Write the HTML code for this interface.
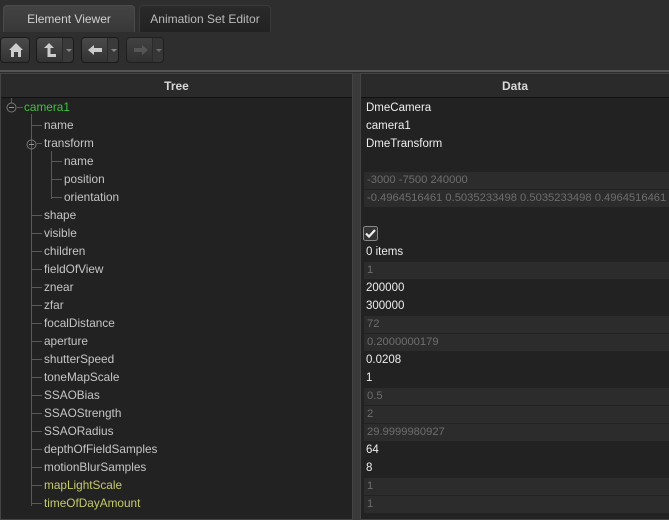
<!DOCTYPE html>
<html><head><style>
*{margin:0;padding:0;box-sizing:border-box}
body{width:669px;height:520px;background:#2d2d2d;font-family:"Liberation Sans",sans-serif;font-size:12px;position:relative;overflow:hidden}
.tab{position:absolute;top:5px;height:27px;border-radius:4px 4px 0 0;font-size:12px;text-align:center;line-height:27px}
.btn{position:absolute;top:37px;height:26px;border:1px solid #1a1a1a;border-radius:4px;background:linear-gradient(#4a4a4a,#333)}
.dd{position:absolute;right:0;top:0;bottom:0;width:11px;border-left:1px solid #2a2a2a;background:#3a3a3a;border-radius:0 4px 4px 0}
.dd:after{content:"";position:absolute;left:3px;top:11px;border:3px solid transparent;border-top:3px solid #888}
.panel{position:absolute;top:73px;bottom:0;background:#222;border:1px solid #444}
.hdr{height:24px;border-bottom:1px solid #111;background:#2a2a2a;color:#d8d8d8;font-weight:bold;text-align:center;line-height:25px}
.row{position:absolute;height:18px;line-height:18px;white-space:nowrap}
.t{color:#c6c6c6;font-size:11.8px}
.d{left:366px;color:#eee;font-size:11.5px}
.g{left:364px;right:0;background:#2c2c2c;color:#6e6e6e;padding-left:3px;height:17px;font-size:11.2px}
.ln{position:absolute;background:#5a5a5a}
</style></head><body>
<div style="position:absolute;left:0;top:0;width:669px;height:70px;background:#2e2e2e"></div>
<div class="tab" style="left:3px;width:132px;background:linear-gradient(#434343,#383838);color:#d0d0d0;border:1px solid #4a4a4a;border-bottom:none">Element Viewer</div>
<div class="tab" style="left:139px;width:132px;background:linear-gradient(#2a2a2a,#222);color:#bbb;border:1px solid #3a3a3a;border-bottom:none">Animation Set Editor</div>
<div class="btn" style="left:0;width:30px"><svg width="30" height="24"><path d="M8 12 L15 5 L22 12 L20 12 L20 19 L17 19 L17 14 L13 14 L13 19 L10 19 L10 12 Z" fill="#ccc"/></svg></div>
<div class="btn" style="left:36px;width:38px"><svg width="26" height="24"><path d="M12 5 L7 10 L10.5 10 L10.5 19 L19 19 L19 16 L13.5 16 L13.5 10 L17 10 Z" fill="#ccc"/></svg><div class="dd"></div></div>
<div class="btn" style="left:81px;width:38px"><svg width="26" height="24"><path d="M6 12 L12 7 L12 10 L20 10 L20 14 L12 14 L12 17 Z" fill="#ccc"/></svg><div class="dd"></div></div>
<div class="btn" style="left:126px;width:38px;opacity:.7"><svg width="26" height="24"><path d="M21 12 L15 7 L15 10 L7 10 L7 14 L15 14 L15 17 Z" fill="#666"/></svg><div class="dd"></div></div>
<div style="position:absolute;left:0;top:70px;width:669px;height:2px;background:#555"></div>
<div class="panel" style="left:0;width:353px"><div class="hdr">Tree</div></div>
<div style="position:absolute;left:353px;top:73px;width:7px;bottom:0;background:#3a3a3a"></div>
<div class="panel" style="left:360px;width:309px;border-right:none"><div class="hdr">Data</div></div>
<div class="ln" style="left:11px;top:98px;width:1px;height:5px"></div>
<div class="ln" style="left:31px;top:114px;width:1px;height:392px"></div>
<div class="ln" style="left:51px;top:151px;width:1px;height:48px"></div>
<svg style="position:absolute;left:6px;top:102px" width="11" height="11"><circle cx="5.5" cy="5.5" r="4.5" fill="none" stroke="#777"/><line x1="3" y1="5.5" x2="8" y2="5.5" stroke="#999"/></svg>
<div class="ln" style="left:17px;top:107px;width:6px;height:1px"></div>
<svg style="position:absolute;left:26px;top:139px" width="11" height="11"><circle cx="5.5" cy="5.5" r="4.5" fill="none" stroke="#777"/><line x1="3" y1="5.5" x2="8" y2="5.5" stroke="#999"/></svg>
<div id="tree"></div>
<div class="row" style="left:24px;top:98px;color:#3ec33e;font-size:11.8px">camera1</div>
<script>
var rows=[["name",1],["transform",1],["name",2],["position",2],["orientation",2],["shape",1],["visible",1],["children",1],["fieldOfView",1],["znear",1],["zfar",1],["focalDistance",1],["aperture",1],["shutterSpeed",1],["toneMapScale",1],["SSAOBias",1],["SSAOStrength",1],["SSAORadius",1],["depthOfFieldSamples",1],["motionBlurSamples",1],["mapLightScale",1,"#c5cc6a"],["timeOfDayAmount",1,"#c5cc6a"]];
var data=[["d","DmeCamera"],["d","camera1"],["d","DmeTransform"],["",""],["g","-3000 -7500 240000"],["g","-0.4964516461 0.5035233498 0.5035233498 0.4964516461"],["",""],["c",""],["d","0 items"],["g","1"],["d","200000"],["d","300000"],["g","72"],["g","0.2000000179"],["d","0.0208"],["d","1"],["g","0.5"],["g","2"],["g","29.9999980927"],["d","64"],["d","8"],["g","1"],["g","1"]];
var h="";
rows.forEach(function(r,i){var top=116+i*18;var x=r[1]==1?44:64;var lx=r[1]==1?32:52;
if(r[0]!="transform")h+='<div class="ln" style="left:'+lx+'px;top:'+(top+9)+'px;width:'+(x-lx-2)+'px;height:1px"></div>';
else h+='<div class="ln" style="left:37px;top:'+(top+9)+'px;width:5px;height:1px"></div>';
h+='<div class="row t" style="left:'+x+'px;top:'+top+'px;'+(r[2]?'color:'+r[2]:'')+'">'+r[0]+'</div>';});
data.forEach(function(d,i){var top=99+i*18;
if(d[0]=="d")h+='<div class="row d" style="top:'+top+'px">'+d[1]+'</div>';
else if(d[0]=="g")h+='<div class="row g" style="top:'+(top+1)+'px;line-height:17px">'+d[1]+'</div>';
else if(d[0]=="c")h+='<svg style="position:absolute;left:363px;top:'+(top+1)+'px" width="15" height="15"><rect x="0.5" y="0.5" width="14" height="14" rx="2" fill="#333" stroke="#888"/><path d="M3 7.5 L6 10.5 L12 4" fill="none" stroke="#eee" stroke-width="2.2"/></svg>';});
document.getElementById("tree").innerHTML=h;
</script>
</body></html>
